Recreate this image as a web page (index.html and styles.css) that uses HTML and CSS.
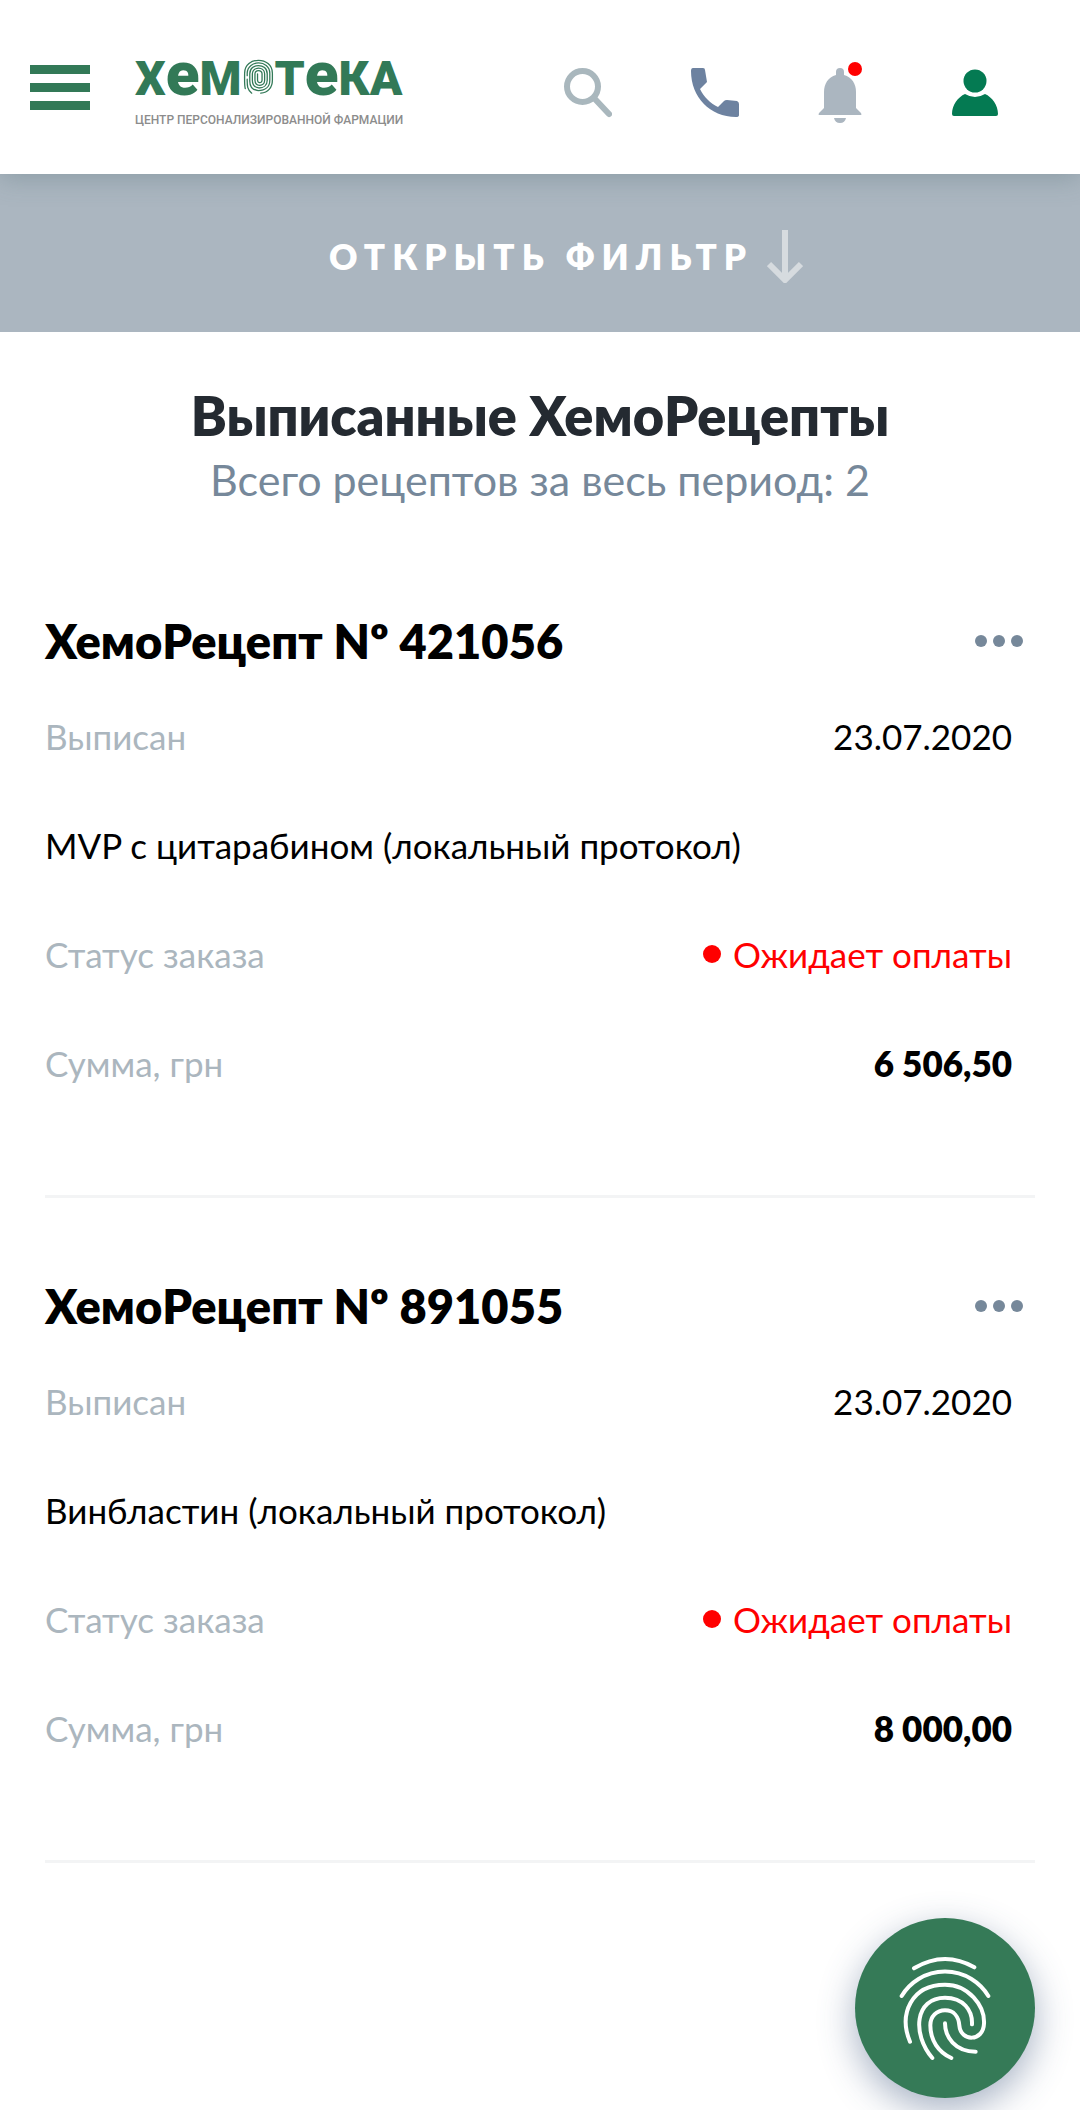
FILE: index.html
```html
<!DOCTYPE html>
<html lang="ru">
<head>
<meta charset="utf-8">
<meta name="viewport" content="width=device-width">
<title>Выписанные ХемоРецепты</title>
<link rel="stylesheet" href="styles.css">
</head>
<body>
<header class="header">
  <button class="menu" aria-label="Меню"><span class="menu-bar"></span><span class="menu-bar"></span><span class="menu-bar"></span></button>
  <a class="logo" href="#">
    <span class="logo-word">Х<span class="logo-low">е</span>М<svg class="logo-print" viewBox="717 85 96 110" fill="none" stroke="currentColor" stroke-width="4" stroke-linecap="round"><path d="M724 176C721 165 722 145 722 128C722 75 808 75 808 128V150C808 172 795 188 772 190"/><path d="M744 190C729 178 730 165 730 147M730 136V128C732 86 799 86 800 128V150C800 170 786 182 764 182C745 180 738 170 738 152V130C738 96 792 96 792 130V150C792 166 780 174 766 174C752 172 746 165 746 150V130C747 107 783 107 784 130V150C784 170 755 172 754 150V130C755 117 775 117 776 130V150C775 160 763 160 762 150V130"/></svg>Т<span class="logo-low">е</span>КА</span>
    <span class="logo-tag">ЦЕНТР ПЕРСОНАЛИЗИРОВАННОЙ ФАРМАЦИИ</span>
  </a>
  <nav class="actions">
    <button class="action" aria-label="Поиск"><svg width="48" height="50" viewBox="0 0 48 50" fill="none" stroke="#a9b7bd"><circle cx="18.500" cy="18.500" r="15.500" stroke-width="6"/><path d="M30 30L45 46" stroke-width="6" stroke-linecap="round"/></svg></button>
    <button class="action" aria-label="Позвонить"><svg width="50" height="50" viewBox="0 0 50 50" fill="#6d82a0"><path d="M3 0H13Q15 0 15 2L17 14L10 21C14 29 20 35 28 39L34 33Q35 32 37 32L47 33Q49 34 49 36V47Q49 49 46 49C20 49 1 29 1 3Q1 0 3 0Z"/></svg></button>
    <button class="action action-bell" aria-label="Уведомления"><svg width="44" height="56" viewBox="0 0 44 56" fill="#abb6c0"><path d="M18 4a4 4 0 0 1 8 0V7C34 9 38 16 38 24V40L43 45Q44 47 43 47H1Q0 47 1 45L6 40V24C6 16 10 9 18 7ZM16 50H28Q27 55 22 55Q17 55 16 50Z"/></svg><span class="badge"></span></button>
    <button class="action" aria-label="Профиль"><svg width="46" height="48" viewBox="0 0 46 48" fill="#047a52"><circle cx="23" cy="13" r="11.500"/><path d="M13 26Q23 32 33 26C40 29 46 37 46 46Q46 48 44 48H2Q0 48 0 46C0 37 6 29 13 26Z"/></svg></button>
  </nav>
</header>
<button class="filter">ОТКРЫТЬ ФИЛЬТР<svg width="36" height="54" viewBox="0 0 36 54" fill="none" stroke="#d6dbdf" stroke-width="6"><path d="M18 1V49M2 35L18 51L34 35"/></svg></button>
<main class="main">
  <h1 class="title">Выписанные ХемоРецепты</h1>
  <p class="total">Всего рецептов за весь период: 2</p>
  <article class="card">
    <div class="card-head"><h2 class="card-title">ХемоРецепт Nº 421056</h2><button class="more" aria-label="Действия"><span class="more-dot"></span><span class="more-dot"></span><span class="more-dot"></span></button></div>
    <dl class="details">
      <div class="row"><dt>Выписан</dt><dd>23.07.2020</dd></div>
      <div class="row"><dt class="protocol">MVP с цитарабином (локальный протокол)</dt></div>
      <div class="row"><dt>Статус заказа</dt><dd class="status">Ожидает оплаты</dd></div>
      <div class="row"><dt>Сумма, грн</dt><dd class="sum">6 506,50</dd></div>
    </dl>
  </article>
  <article class="card">
    <div class="card-head"><h2 class="card-title">ХемоРецепт Nº 891055</h2><button class="more" aria-label="Действия"><span class="more-dot"></span><span class="more-dot"></span><span class="more-dot"></span></button></div>
    <dl class="details">
      <div class="row"><dt>Выписан</dt><dd>23.07.2020</dd></div>
      <div class="row"><dt class="protocol">Винбластин (локальный протокол)</dt></div>
      <div class="row"><dt>Статус заказа</dt><dd class="status">Ожидает оплаты</dd></div>
      <div class="row"><dt>Сумма, грн</dt><dd class="sum">8 000,00</dd></div>
    </dl>
  </article>
</main>
<button class="fab" aria-label="Вход по отпечатку"><svg width="94" height="107" viewBox="204 194 282 321" fill="none" stroke="#fff" stroke-width="12" stroke-linecap="round"><path d="M252 234Q343 180 433 231M215 317A152 152 0 0 1 475 317M240 454C205 370 245 283 345 283C415 283 465 345 462 400C460 455 392 455 388 405C386 380 372 360 345 360C320 360 301 378 301 405C301 450 325 485 364 503M307 503C245 430 255 322 345 322C400 322 428 360 426 402M345 399C345 440 375 484 437 484"/></svg></button>
</body>
</html>
```
FILE: styles.css
```css
* { box-sizing: border-box; margin: 0; padding: 0; }
body {
  min-height: 100vh;
  background: #fff;
  color: #000;
  font-family: Lato, "Open Sans", sans-serif;
}
button { border: 0; background: none; color: inherit; font: inherit; cursor: pointer; }
svg { display: block; }

.header {
  position: relative;
  display: flex;
  align-items: flex-start;
  height: 174px;
  padding: 56px 82px 0 30px;
  background: #fff;
  box-shadow: 0 4px 24px rgba(80, 110, 115, 0.35);
}
.menu { display: flex; flex-direction: column; gap: 9px; width: 60px; margin: 9px 45px 0 0; }
.menu-bar { height: 9px; background: #327957; }
.logo { color: #327957; text-decoration: none; font-family: Roboto, sans-serif; }
.logo-word { display: flex; align-items: baseline; height: 56px; font-size: 48px; line-height: 36px; font-weight: 900; }
.logo-low { font-size: 62px; }
.logo-print { width: 31px; height: 36px; margin: 3px 1px 0; align-self: flex-start; }
.logo-tag { display: block; color: #8c8c8c; font-size: 12px; line-height: 16px; font-weight: 500; white-space: nowrap; }
.actions { display: flex; align-items: flex-start; gap: 78px; margin: 12px 0 0 auto; }
.action-bell { position: relative; width: 56px; }
.badge { position: absolute; top: -6px; left: 30px; width: 14px; height: 14px; border-radius: 50%; background: #f00; }

.filter {
  display: flex;
  align-items: center;
  justify-content: center;
  gap: 14px;
  width: 100%;
  height: 158px;
  padding: 6px 0 0 52px;
  background: #abb6c0;
  color: #fff;
  font-size: 35px;
  font-weight: 800;
  letter-spacing: 7px;
}

.main { padding: 52px 45px 0; }
.title { color: #242a31; font-size: 54px; line-height: 64px; font-weight: 800; text-align: center; }
.total { color: #76889a; font-size: 43px; line-height: 64px; text-align: center; }
.card { padding: 97px 0 78px; border-bottom: 3px solid #f3f4f5; }
.card + .card { padding-top: 76px; }
.card-head { display: flex; align-items: center; justify-content: space-between; padding-right: 12px; }
.card-title { font-size: 47px; line-height: 64px; font-weight: 800; }
.more { display: flex; gap: 6px; }
.more-dot { width: 12px; height: 12px; border-radius: 50%; background: #76889a; }
.details { margin-top: 8px; padding-right: 23px; }
.row { display: flex; align-items: center; justify-content: space-between; height: 109px; font-size: 35px; line-height: 48px; }
.row dt { color: #abb6be; }
.row .protocol { color: #000; }
.status { display: flex; align-items: center; gap: 12px; color: #f00; }
.status::before { content: ""; width: 18px; height: 18px; border-radius: 50%; background: #f00; }
.sum { font-weight: 800; }

.fab {
  position: fixed;
  right: 45px;
  bottom: 12px;
  display: flex;
  align-items: center;
  justify-content: center;
  width: 180px;
  height: 180px;
  border-radius: 50%;
  background: #357a57;
  box-shadow: 0 12px 36px rgba(60, 85, 125, 0.45);
}
```
